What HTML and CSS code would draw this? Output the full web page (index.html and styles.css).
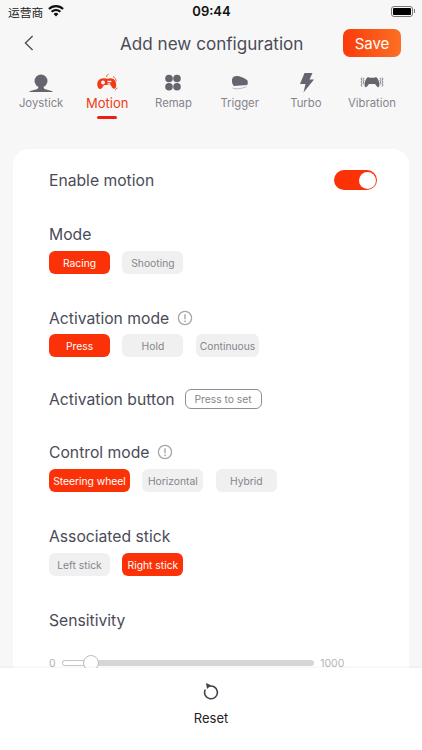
FILE: index.html
```html
<!DOCTYPE html>
<html lang="en">
<head>
<meta charset="utf-8">
<title>Add new configuration</title>
<link rel="stylesheet" href="styles.css">
</head>
<body>
<div class="app">
  <div class="status">
    <div class="status-left">
      <span class="carrier">运营商</span>
      <svg class="wifi" width="16" height="12" viewBox="0 0 16 12"><path d="M8 11.500 5.600 8.900a3.400 3.400 0 0 1 4.800 0zM4.300 7.600 2.900 6.100a7.200 7.200 0 0 1 10.200 0l-1.400 1.500a5.200 5.200 0 0 0-7.400 0zM1.600 4.800.2 3.300a11 11 0 0 1 15.600 0l-1.400 1.500a9 9 0 0 0-12.800 0z" fill="#111"/></svg>
    </div>
    <span class="time">09:44</span>
    <div class="battery"><div class="battery-body"><div class="battery-fill"></div></div><div class="battery-tip"></div></div>
  </div>

  <header class="nav">
    <svg class="back" width="10" height="16" viewBox="0 0 10 16"><path d="M8.600 1 1.400 8l7.200 7" fill="none" stroke="#4a4b57" stroke-width="1.300"/></svg>
    <h1 class="title">Add new configuration</h1>
    <button class="save">Save</button>
  </header>

  <nav class="tabs">
    <div class="tab">
      <svg class="tab-icon" width="26" height="20" viewBox="0 0 26 20"><circle cx="13" cy="8" r="6.500" fill="#65656f"/><path d="M11 13h4l1.500 3 8 2.300v.7H1.500v-.7l8-2.300z" fill="#65656f"/></svg>
      <span>Joystick</span>
    </div>
    <div class="tab active">
      <svg class="tab-icon" width="26" height="20" viewBox="0 0 26 20"><path d="M4 8c2-2.500 5-3 7.500-2.500l3 .2c2.500-.8 5-.2 6.500 1.800 1.300 2.200 1.500 5.500.7 7.200-1 1.600-2.600 1.300-3.600-.2l-1.600-2.500H10l-2 3c-1 1.300-2.800 1.400-3.700.1C3 12.800 2.800 10 4 8z" fill="#f23a18"/><circle cx="9" cy="9.500" r="1.900" fill="#fff"/><rect x="13.500" y="7.800" width="3.800" height="1.400" fill="#fff"/><rect x="13.500" y="10.300" width="2.800" height="1.300" fill="#fff"/><path d="M12.500 4c.2-1.500 1-2.500 2-3M19 3.500c2 1 3 2.700 3.300 5M21 17c1.200-.6 1.800-1.300 2.300-2.300" fill="none" stroke="#f23a18" stroke-width=".8"/></svg>
      <span>Motion</span>
      <div class="tab-bar"></div>
    </div>
    <div class="tab">
      <svg class="tab-icon" width="26" height="20" viewBox="0 0 26 20"><circle cx="9" cy="5.500" r="3.800" fill="#65656f"/><circle cx="17" cy="5.500" r="3.800" fill="#65656f"/><circle cx="9" cy="13.800" r="3.800" fill="#65656f"/><circle cx="17" cy="13.800" r="3.800" fill="#65656f"/></svg>
      <span>Remap</span>
    </div>
    <div class="tab">
      <svg class="tab-icon" width="26" height="20" viewBox="0 0 26 20"><path d="M5 6.500C5.500 3.500 8 2.500 11 3c3.500.6 7.500 2.500 9.300 4.200.7 1 .6 3.600-.1 4.800L7 13C5.500 12 4.600 9 5 6.500z" fill="#65656f"/><path d="M5.500 15c3 1.500 8 1 14-1.300" fill="none" stroke="#b9b9bf" stroke-width="1"/></svg>
      <span>Trigger</span>
    </div>
    <div class="tab">
      <svg class="tab-icon" width="26" height="20" viewBox="0 0 26 20"><path d="M11.500 0h8l-3 6.500H21L10.500 19.500l2-8.500H7z" fill="#65656f"/></svg>
      <span>Turbo</span>
    </div>
    <div class="tab">
      <svg class="tab-icon" width="26" height="20" viewBox="0 0 26 20"><path d="M8 4.800c1.200-.8 2.200-.6 3 0h4c.8-.6 1.800-.8 3 0 1.700 1.800 2.800 5.500 2.300 8.500-.5 1.200-1.500 1-2.300.2L16 11h-6l-2 2.500c-.8.800-1.800 1-2.300-.2C5.200 10.300 6.300 6.600 8 4.800z" fill="#65656f"/><path d="M3 4.500l-1 1.500 1 1.500-1 1.500 1 1.500-1 1.500 1 1.500M5 5l-.8 1.300.8 1.300-.8 1.300.8 1.300-.8 1.300M23 4.500l1 1.500-1 1.500 1 1.500-1 1.500 1 1.500-1 1.500M21 5l.8 1.300-.8 1.300.8 1.300-.8 1.300.8 1.300" fill="none" stroke="#65656f" stroke-width=".8"/></svg>
      <span>Vibration</span>
    </div>
  </nav>

  <main class="scroll">
    <section class="card">
      <div class="row row-enable">
        <span class="label">Enable motion</span>
        <div class="switch"><div class="knob"></div></div>
      </div>

      <div class="group">
        <div class="label-line"><span class="label">Mode</span></div>
        <div class="chips">
          <span class="chip on">Racing</span>
          <span class="chip">Shooting</span>
        </div>
      </div>

      <div class="group">
        <div class="label-line">
          <span class="label">Activation mode</span>
          <svg class="info" width="16" height="16" viewBox="0 0 16 16"><circle cx="8" cy="8" r="6.600" fill="none" stroke="#a6a6ab" stroke-width="1.300"/><path d="M8 4.200v5" stroke="#a6a6ab" stroke-width="1.400"/><circle cx="8" cy="11.300" r=".9" fill="#a6a6ab"/></svg>
        </div>
        <div class="chips chips-close">
          <span class="chip on">Press</span>
          <span class="chip">Hold</span>
          <span class="chip tight">Continuous</span>
        </div>
      </div>

      <div class="row row-button">
        <span class="label">Activation button</span>
        <span class="set">Press to set</span>
      </div>

      <div class="group group-control">
        <div class="label-line">
          <span class="label">Control mode</span>
          <svg class="info" width="16" height="16" viewBox="0 0 16 16"><circle cx="8" cy="8" r="6.600" fill="none" stroke="#a6a6ab" stroke-width="1.300"/><path d="M8 4.200v5" stroke="#a6a6ab" stroke-width="1.400"/><circle cx="8" cy="11.300" r=".9" fill="#a6a6ab"/></svg>
        </div>
        <div class="chips">
          <span class="chip on wide">Steering wheel</span>
          <span class="chip">Horizontal</span>
          <span class="chip">Hybrid</span>
        </div>
      </div>

      <div class="group">
        <div class="label-line"><span class="label">Associated stick</span></div>
        <div class="chips">
          <span class="chip">Left stick</span>
          <span class="chip on">Right stick</span>
        </div>
      </div>

      <div class="group">
        <div class="label-line"><span class="label">Sensitivity</span></div>
        <div class="slider">
          <span class="limit">0</span>
          <div class="track"><div class="fill"></div><div class="thumb"></div></div>
          <span class="limit">1000</span>
        </div>
      </div>
    </section>
  </main>

  <footer class="footer">
    <svg width="18" height="18" viewBox="0 0 18 18"><path d="M6.300 3.600A6.400 6.400 0 1 1 3.300 6.500" fill="none" stroke="#40414f" stroke-width="1.600" transform="translate(0 1)"/><path d="M4 1 9 3.300 5 7z" fill="#40414f"/></svg>
    <span class="reset">Reset</span>
  </footer>
</div>
</body>
</html>
```
FILE: styles.css
```css
* { box-sizing: border-box; }
html, body { margin: 0; padding: 0; }
body { font-family: Inter, "Noto Sans CJK SC", sans-serif; background: #f7f7f7; }
.app { width: 422px; height: 750px; display: flex; flex-direction: column; overflow: hidden; background: #f7f7f7; }

.status { height: 22px; flex: none; display: grid; grid-template-columns: 1fr auto 1fr; align-items: center; padding: 0 7px 0 8px; }
.status-left { display: flex; align-items: center; gap: 5px; }
.carrier { font-size: 11.800px; color: #222; }
.wifi { display: block; }
.time { font-size: 13px; font-weight: 600; color: #111; }
.battery { display: flex; align-items: center; gap: 1px; justify-self: end; }
.battery-body { width: 22px; height: 11px; border: 1px solid #777; border-radius: 3px; padding: 1px; }
.battery-fill { width: 100%; height: 100%; background: #000; border-radius: 1px; }
.battery-tip { width: 1px; height: 4px; background: #777; }

.nav { height: 42px; flex: none; display: grid; grid-template-columns: 1fr auto 1fr; align-items: center; padding: 0 21px 0 24px; }
.title { margin: 0 0 0 -1.500px; font-size: 17.100px; font-weight: 400; color: #4a4b57; }
.back { display: block; }
.save { justify-self: end; width: 58px; height: 28px; border: 0; border-radius: 7px; color: #fff; font: 400 15px Inter, sans-serif; background: linear-gradient(90deg, #fb3a0c, #fb7024); padding: 0; }

.tabs { flex: none; height: 55px; display: grid; grid-template-columns: repeat(6, 66.200px); padding-left: 8px; padding-top: 9px; }
.tab { display: flex; flex-direction: column; align-items: center; color: #85858d; font-size: 11.300px; }
.tab-icon { display: block; margin-bottom: 3px; }
.tab span { line-height: 15px; }
.tab.active { color: #ee3a18; font-size: 13px; }
.tab-bar { width: 20px; height: 3px; border-radius: 2px; background: #f01d17; margin-top: 5px; }

.scroll { flex: 1; min-height: 0; overflow: hidden; padding: 30px 13px 0; }
.card { background: #fff; border-radius: 16px 16px 0 0; padding: 21px 32px 40px 36px; }

.row { display: flex; align-items: center; }
.row-enable { justify-content: space-between; height: 20px; }
.row-button { height: 20px; gap: 10px; margin-top: 32px; }
.label { font-size: 15.700px; line-height: 18px; padding-top: 2px; color: #4a4b57; }
.switch { width: 43px; height: 20px; border-radius: 10px; background: #fb3208; padding: 1.500px; display: flex; justify-content: flex-end; }
.knob { width: 17px; height: 17px; border-radius: 50%; background: #fff; }

.group { margin-top: 34px; }
.group-control { margin-top: 33px; }
.label-line { display: flex; align-items: center; gap: 7.500px; height: 20px; }
.chips { display: flex; gap: 12.400px; margin-top: 7px; }
.chips-close { margin-top: 6px; }
.chip { width: 61px; height: 23px; border-radius: 6px; background: #f0f0f0; color: #85858d; font-size: 10.300px; display: flex; align-items: center; justify-content: center; white-space: nowrap; }
.chip.on { background: #fb3208; color: #fff; }
.chip.wide { width: 81px; }
.chip.tight { width: 63.500px; }
.set { width: 77px; height: 20px; border: 1px solid #8e8e94; border-radius: 6px; color: #85858d; font-size: 10.300px; display: flex; align-items: center; justify-content: center; }

.slider { display: flex; align-items: center; margin-top: 25px; height: 16px; }
.limit { font-size: 10.500px; color: #b4b4b8; }
.track { width: 252px; height: 6px; background: #d6d6d6; border-radius: 3px; margin: 0 6.500px 0 6px; position: relative; }
.fill { width: 26px; height: 6px; background: #fff; border: 1px solid #c6c6c6; border-radius: 3px 0 0 3px; }
.thumb { position: absolute; left: 21px; top: -5px; width: 16px; height: 16px; border-radius: 50%; background: #fff; border: 1px solid #bdbdbd; }

.footer { flex: none; height: 82px; background: #fff; box-shadow: 0 -1px 2px rgba(0,0,0,.05); position: relative; display: flex; flex-direction: column; align-items: center; padding-top: 14px; }
.footer svg { display: block; }
.reset { font-size: 13px; color: #222; margin-top: 10px; line-height: 16px; }
```
